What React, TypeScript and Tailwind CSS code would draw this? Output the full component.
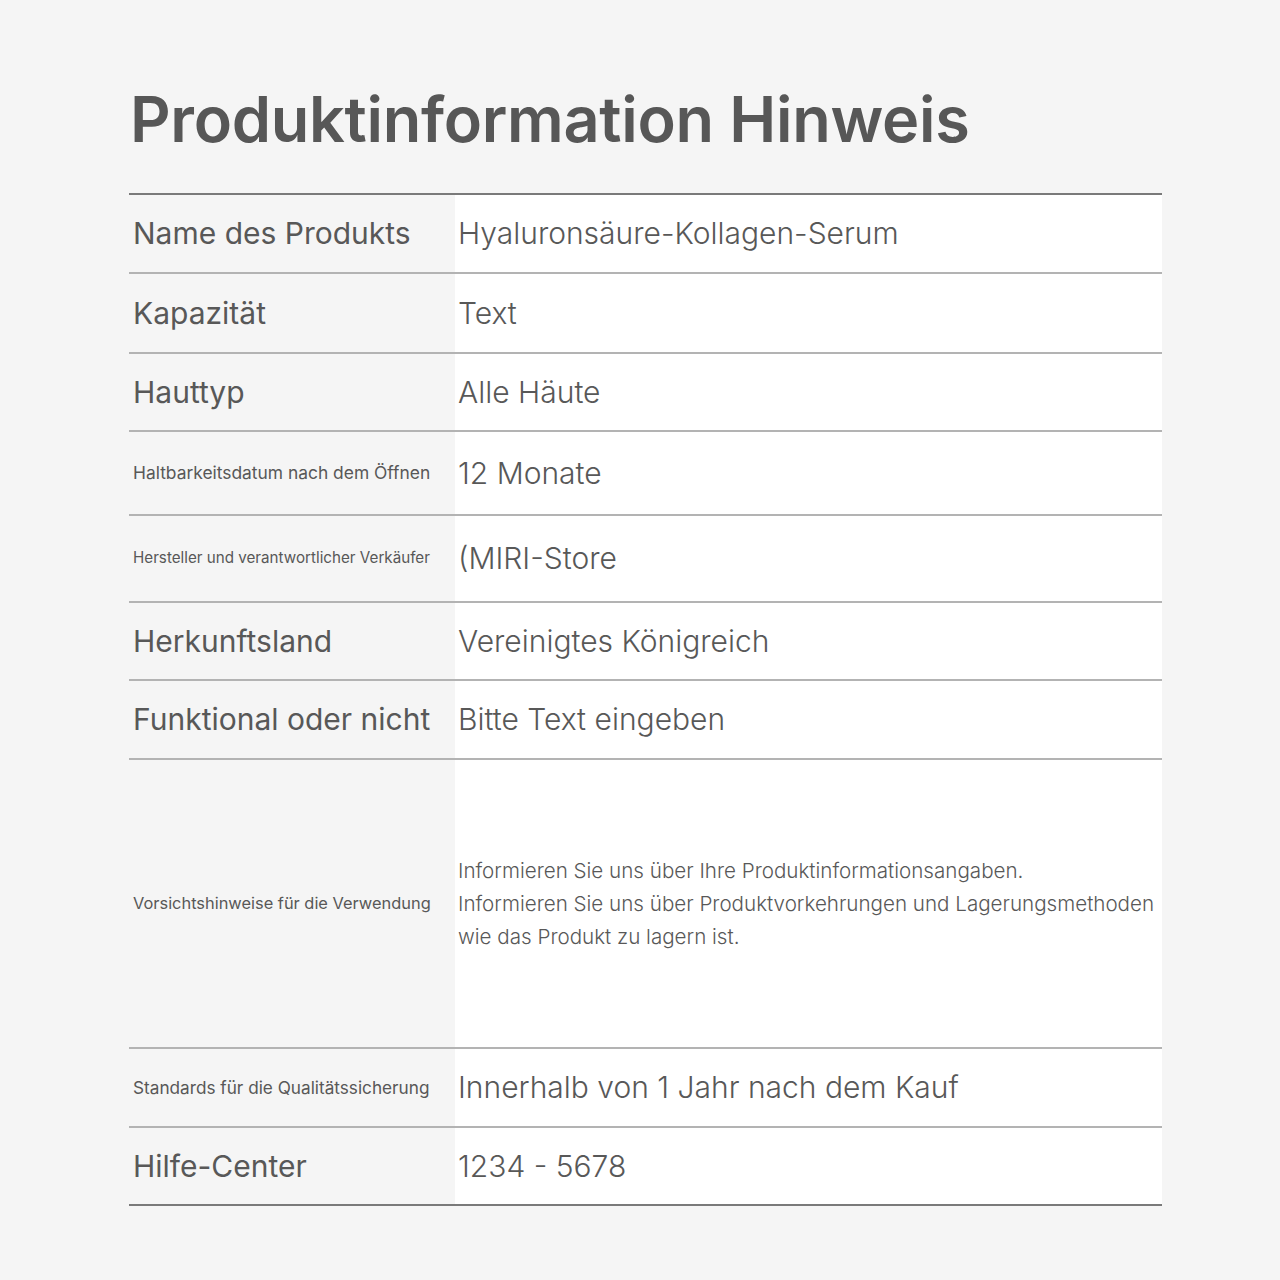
const rows: { label: string; labelSize: string; value: string; h: string }[] = [
  { label: 'Name des Produkts', labelSize: 'text-[30px]', value: 'Hyaluronsäure-Kollagen-Serum', h: 'h-[79px]' },
  { label: 'Kapazität', labelSize: 'text-[30px]', value: 'Text', h: 'h-[80px]' },
  { label: 'Hauttyp', labelSize: 'text-[30px]', value: 'Alle Häute', h: 'h-[78px]' },
  { label: 'Haltbarkeitsdatum nach dem Öffnen', labelSize: 'text-[17.4px]', value: '12 Monate', h: 'h-[84px]' },
  { label: 'Hersteller und verantwortlicher Verkäufer', labelSize: 'text-[15.2px]', value: '(MIRI-Store', h: 'h-[87px]' },
  { label: 'Herkunftsland', labelSize: 'text-[30px]', value: 'Vereinigtes Königreich', h: 'h-[78px]' },
  { label: 'Funktional oder nicht', labelSize: 'text-[30px]', value: 'Bitte Text eingeben', h: 'h-[79px]' },
];

const rowsAfter = [
  { label: 'Standards für die Qualitätssicherung', labelSize: 'text-[17.2px]', value: 'Innerhalb von 1 Jahr nach dem Kauf', h: 'h-[79px]' },
  { label: 'Hilfe-Center', labelSize: 'text-[30px]', value: '1234 - 5678', h: 'h-[78px]' },
];

function Row({ label, labelSize, value, h, last }: { label: string; labelSize: string; value: string; h: string; last?: boolean }) {
  return (
    <div className={`flex ${h} border-b-2 ${last ? 'border-[#7a7a7a]' : 'border-[#b3b3b3]'}`}>
      <div className={`w-[326px] flex items-center pl-[4px] ${labelSize} text-[#585858] whitespace-nowrap`}>{label}</div>
      <div className="flex-1 bg-white flex items-center pl-[3px] text-[30px] font-light text-[#585858]">{value}</div>
    </div>
  );
}

export default function App() {
  return (
    <div className="w-[1280px] h-[1280px] bg-[#f5f5f5] pt-[88px] pl-[129px]" style={{ fontFamily: 'Inter, "Noto Sans", sans-serif' }}>
      <h1 className="text-[63px] font-semibold text-[#575757] leading-none pl-[1px] tracking-[-0.3px]">Produktinformation Hinweis</h1>
      <div className="w-[1033px] mt-[42px] border-t-2 border-[#7a7a7a]">
        {rows.map((r) => (
          <Row key={r.label} {...r} />
        ))}
        <div className="flex h-[289px] border-b-2 border-[#b3b3b3]">
          <div className="w-[326px] flex items-center pl-[4px] text-[16.4px] text-[#585858] whitespace-nowrap">Vorsichtshinweise für die Verwendung</div>
          <div className="flex-1 bg-white flex items-center pl-[3px] text-[20.6px] font-light leading-[33px] text-[#585858]">
            <p>
              Informieren Sie uns über Ihre Produktinformationsangaben.
              <br />
              Informieren Sie uns über Produktvorkehrungen und Lagerungsmethoden
              <br />
              wie das Produkt zu lagern ist.
            </p>
          </div>
        </div>
        {rowsAfter.map((r, i) => (
          <Row key={r.label} {...r} last={i === rowsAfter.length - 1} />
        ))}
      </div>
    </div>
  );
}
